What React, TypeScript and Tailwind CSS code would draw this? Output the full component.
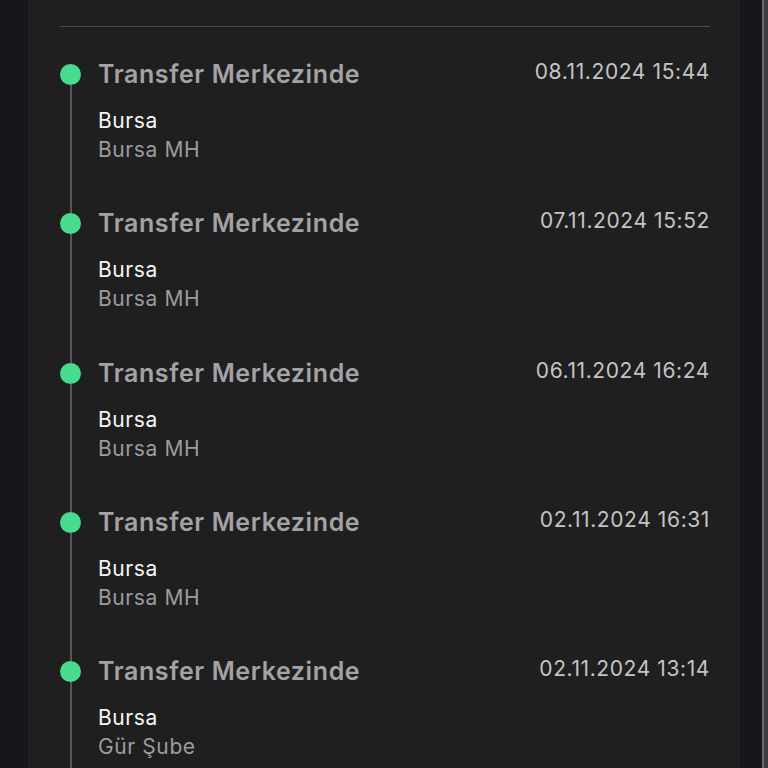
import React from 'react';

interface TrackingEvent {
  status: string;
  date: string;
  city: string;
  branch: string;
}

const events: TrackingEvent[] = [
  { status: 'Transfer Merkezinde', date: '08.11.2024 15:44', city: 'Bursa', branch: 'Bursa MH' },
  { status: 'Transfer Merkezinde', date: '07.11.2024 15:52', city: 'Bursa', branch: 'Bursa MH' },
  { status: 'Transfer Merkezinde', date: '06.11.2024 16:24', city: 'Bursa', branch: 'Bursa MH' },
  { status: 'Transfer Merkezinde', date: '02.11.2024 16:31', city: 'Bursa', branch: 'Bursa MH' },
  { status: 'Transfer Merkezinde', date: '02.11.2024 13:14', city: 'Bursa', branch: 'Gür Şube' },
];

// Tek bir zaman çizelgesi satırı
const TimelineItem: React.FC<{ item: TrackingEvent; first: boolean }> = ({ item, first }) => (
  <div className="flex gap-[17px]">
    <div className="flex w-[21px] flex-shrink-0 flex-col items-center">
      <div className={`h-[6px] w-[2px] ${first ? 'bg-transparent' : 'bg-[#555557]'}`} />
      <div className="h-[21px] w-[21px] rounded-full bg-[#48da8d]" />
      <div className="w-[2px] flex-1 bg-[#555557]" />
    </div>
    <div className="flex-1 pb-[43.25px] tracking-[0.6px]">
      <div className="flex items-start justify-between">
        <h3 className="text-[25px] leading-[33px] font-semibold text-[#a3a3a7]">{item.status}</h3>
        <span className="text-[21px] leading-[27px] text-[#c4c4c6]">{item.date}</span>
      </div>
      <p className="mt-[16px] text-[21px] leading-[28px] text-[#f7f7f7]">{item.city}</p>
      <p className="text-[21px] leading-[29px] text-[#9c9c9f]">{item.branch}</p>
    </div>
  </div>
);

export default function App() {
  return (
    <div
      className="flex h-[768px] w-[768px] overflow-hidden bg-[#16171a]"
      style={{ fontFamily: 'Inter, "Noto Sans", sans-serif' }}
    >
      <div className="ml-[28px] w-[712px] bg-[#1f1f1f] pl-[32px] pr-[30px]">
        <div className="mt-[26px] h-px bg-[#4a4a4c]" />
        <div className="mt-[31px]">
          {events.map((e, i) => (
            <TimelineItem key={i} item={e} first={i === 0} />
          ))}
        </div>
      </div>
      <div className="ml-[22px] flex">
        <div className="w-[2px] bg-[#6a6a6c]" />
        <div className="w-[4px] bg-[#3c3c3e]" />
      </div>
    </div>
  );
}
